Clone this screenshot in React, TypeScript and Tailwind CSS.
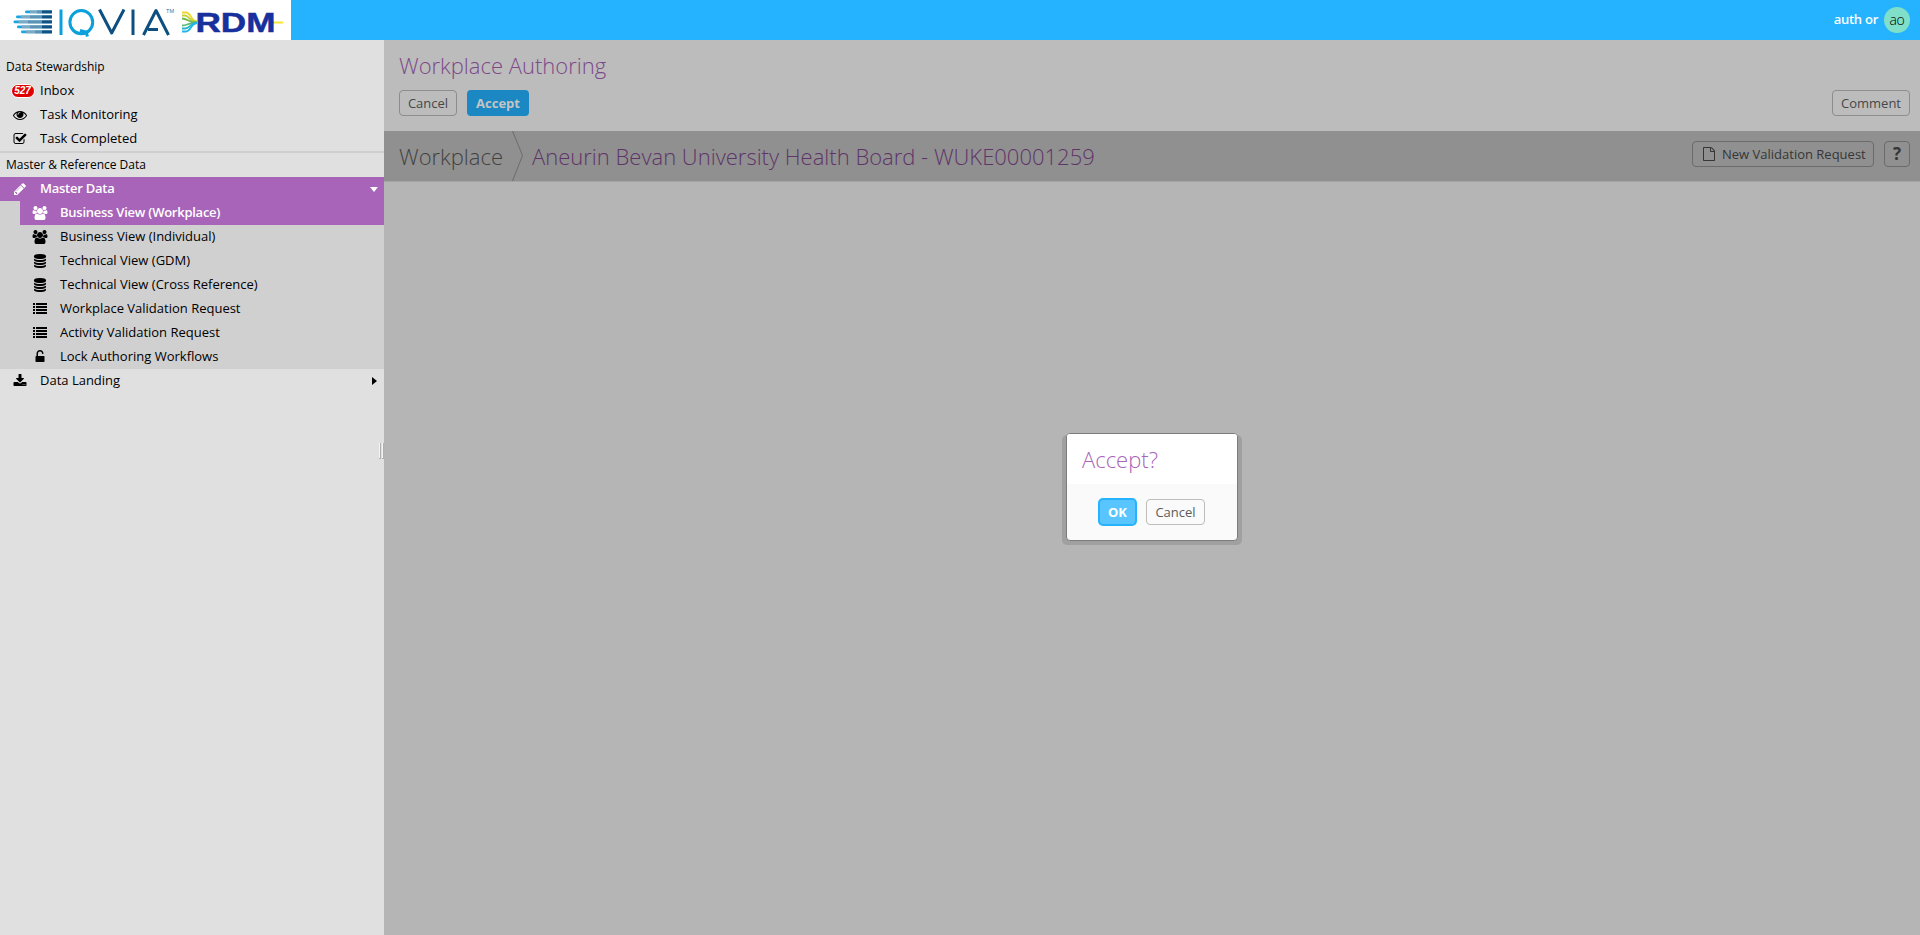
import React from "react";

type Glyph = { d: string; box: string };

const icons: Record<string, Glyph> = {
  eye: {
    box: "0 0 1792 1792",
    d: "M1664 960q-152-236-381-353 61 104 61 225 0 185-131.5 316.5t-316.5 131.5-316.5-131.5-131.5-316.5q0-121 61-225-229 117-381 353 133 205 333.5 326.5t434.5 121.5 434.5-121.5 333.5-326.5zm-720-384q0-20-14-34t-34-14q-125 0-214.5 89.5t-89.5 214.5q0 20 14 34t34 14 34-14 14-34q0-86 61-147t147-61q20 0 34-14t14-34zm848 384q0 34-20 69-140 230-376.5 368.5t-499.5 138.5-499.5-139-376.5-368q-20-35-20-69t20-69q140-229 376.5-368t499.5-139 499.5 139 376.5 368q20 35 20 69z",
  },
  check: {
    box: "0 0 1792 1792",
    d: "M1472 930v318q0 119-84.5 203.5t-203.5 84.5h-832q-119 0-203.5-84.5t-84.5-203.5v-832q0-119 84.5-203.5t203.5-84.5h832q63 0 117 25 15 7 18 23 3 17-9 29l-49 49q-10 10-23 10-3 0-9-2-23-6-45-6h-832q-66 0-113 47t-47 113v832q0 66 47 113t113 47h832q66 0 113-47t47-113v-254q0-13 9-22l64-64q10-10 23-10 6 0 12 3 20 8 20 29zm231-489l-814 814q-24 24-57 24t-57-24l-430-430q-24-24-24-57t24-57l110-110q24-24 57-24t57 24l263 263 647-647q24-24 57-24t57 24l110 110q24 24 24 57t-24 57z",
  },
  pencil: {
    box: "0 0 1792 1792",
    d: "M491 1536l91-91-235-235-91 91v107h128v128h107zm523-928q0-22-22-22-10 0-17 7l-542 542q-7 7-7 17 0 22 22 22 10 0 17-7l542-542q7-7 7-17zm-54-192l416 416-832 832h-416v-416zm683 96q0 53-37 90l-166 166-416-416 166-165q36-38 90-38 53 0 91 38l235 234q37 39 37 91z",
  },
  users: {
    box: "-64 0 2048 1792",
    d: "M593 896q-162 5-265 128h-134q-82 0-138-40.5t-56-118.5q0-353 124-353 6 0 43.5 21t97.5 42.5 119 21.5q67 0 133-23-5 37-5 66 0 139 81 256zm1071 637q0 120-73 189.5t-194 69.5h-874q-121 0-194-69.5t-73-189.5q0-53 3.5-103.5t14-109 26.5-108.5 43-97.5 62-81 85.5-53.5 111.5-20q10 0 43 21.5t73 48 107 48 135 21.5 135-21.5 107-48 73-48 43-21.5q61 0 111.5 20t85.5 53.5 62 81 43 97.5 26.5 108.5 14 109 3.5 103.5zm-1024-1277q0 106-75 181t-181 75-181-75-75-181 75-181 181-75 181 75 75 181zm704 384q0 159-112.5 271.5t-271.5 112.5-271.5-112.5-112.5-271.5 112.5-271.5 271.5-112.5 271.5 112.5 112.5 271.5zm576 225q0 78-56 118.5t-138 40.5h-134q-103-123-265-128 81-117 81-256 0-29-5-66 66 23 133 23 59 0 119-21.5t97.5-42.5 43.5-21q124 0 124 353zm-128-609q0 106-75 181t-181 75-181-75-75-181 75-181 181-75 181 75 75 181z",
  },
  database: {
    box: "0 0 1792 1792",
    d: "M896 768q237 0 443-43t325-127v170q0 69-103 128t-280 93.5-385 34.5-385-34.5-280-93.5-103-128v-170q119 84 325 127t443 43zm0 768q237 0 443-43t325-127v170q0 69-103 128t-280 93.5-385 34.5-385-34.5-280-93.5-103-128v-170q119 84 325 127t443 43zm0-384q237 0 443-43t325-127v170q0 69-103 128t-280 93.5-385 34.5-385-34.5-280-93.5-103-128v-170q119 84 325 127t443 43zm0-1152q208 0 385 34.5t280 93.5 103 128v128q0 69-103 128t-280 93.5-385 34.5-385-34.5-280-93.5-103-128v-128q0-69 103-128t280-93.5 385-34.5z",
  },
  list: {
    box: "0 0 14 14",
    d: "M0 1h2v2H0zM3 1h11v2H3zM0 4h2v2H0zM3 4h11v2H3zM0 7h2v2H0zM3 7h11v2H3zM0 10h2v2H0zM3 10h11v2H3z",
  },
  unlock: {
    box: "0 0 1792 1792",
    d: "M1376 768q40 0 68 28t28 68v576q0 40-28 68t-68 28h-960q-40 0-68-28t-28-68v-576q0-40 28-68t68-28h32v-320q0-185 131.5-316.5t316.5-131.5 316.5 131.5 131.5 316.5q0 26-19 45t-45 19h-64q-26 0-45-19t-19-45q0-106-75-181t-181-75-181 75-75 181v320h736z",
  },
  download: {
    box: "0 0 1792 1792",
    d: "M1344 1344q0-26-19-45t-45-19-45 19-19 45 19 45 45 19 45-19 19-45zm256 0q0-26-19-45t-45-19-45 19-19 45 19 45 45 19 45-19 19-45zm128-224v320q0 40-28 68t-68 28h-1472q-40 0-68-28t-28-68v-320q0-40 28-68t68-28h465l135 136q58 56 136 56t136-56l136-136h464q40 0 68 28t28 68zm-325-569q17 41-14 70l-448 448q-18 19-45 19t-45-19l-448-448q-31-29-14-70 17-39 59-39h256v-448q0-26 19-45t45-19h256q26 0 45 19t19 45v448h256q42 0 59 39z",
  },
  file: {
    box: "0 0 1792 1792",
    d: "M1596 380q28 28 48 76t20 88v1152q0 40-28 68t-68 28h-1344q-40 0-68-28t-28-68v-1600q0-40 28-68t68-28h896q40 0 88 20t76 48zm-444-244v376h376q-10-29-22-41l-313-313q-12-12-41-22zm384 1528v-1024h-416q-40 0-68-28t-28-68v-416h-768v1536h1280z",
  },
};

function Icon({ name, className = "h-3.5" }: { name: string; className?: string }) {
  return (
    <svg viewBox={icons[name].box} className={className} fill="currentColor">
      <path d={icons[name].d} />
    </svg>
  );
}

const handBars = [
  [25, 10.5, 37],
  [16, 15.5, 30],
  [13.5, 20.5, 28],
  [17, 25.5, 30],
  [21, 30.5, 35],
];

function Logo() {
  return (
    <svg width="291" height="40" viewBox="0 0 291 40">
      {handBars.map(([x, y, mid]) => (
        <g key={y}>
          <rect x={x} y={y} width={52 - x} height="2.8" rx="1.4" fill="#1ba4df" />
          <rect x={x + 5} y={y} width={47 - x} height="2.8" fill="#7fa9c2" />
          <rect x={mid} y={y} width={52 - mid} height="2.8" fill="#5c93b5" />
          <rect x="42" y={y} width="10" height="2.8" rx="0.5" fill="#0f5283" />
        </g>
      ))}
      <g fill="none" strokeWidth="3">
        <path d="M61 9.5v25.5" stroke="#0aa0dc" />
        <ellipse cx="81.3" cy="22.2" rx="11.4" ry="11.6" stroke="#0aa0dc" />
        <path d="M80 30.5l6 1.5 1.500 4.500" stroke="#0aa0dc" />
        <path d="M99.5 9.5l12.2 23.5 12.3-23.5" stroke="#0c4f80" strokeLinejoin="round" />
        <path d="M133 9.5v25.5" stroke="#0c4f80" />
        <path d="M143.5 35l12.5-24.5 12.5 24.5M148 29.5h10" stroke="#0c4f80" strokeLinejoin="round" />
      </g>
      <text x="166" y="13" className="fill-[#3d7199] font-['Liberation_Sans'] text-[6px]" textLength="8" lengthAdjust="spacingAndGlyphs">TM</text>
      <g fill="none" strokeWidth="1.8">
        <path d="M182 12.5h4c5 0 5 9 11 9" stroke="#f0d62a" />
        <path d="M182 15.5h3c4 0 5 6.5 12 6.5" stroke="#c3d13a" />
        <path d="M182 18.5c6 0 6 4 15 4" stroke="#6fb84a" />
        <path d="M182 25.5c6 0 6-3 15-3" stroke="#5cb97a" />
        <path d="M182 28.5h3c5 0 5-5.5 12-5.5" stroke="#27b6c9" />
        <path d="M182 31.5h4c5 0 5-8.5 11-8.5" stroke="#22b4ea" />
        <path d="M273 22.5h10" stroke="#f7e533" strokeWidth="2" />
      </g>
      <text x="195.5" y="32" className="fill-[#17309c] stroke-[#17309c] font-['Liberation_Sans'] text-[28px] font-bold" strokeWidth="0.5" textLength="80" lengthAdjust="spacingAndGlyphs">RDM</text>
    </svg>
  );
}

function Row({ icon, label }: { icon: string; label: string }) {
  return (
    <li className="flex h-6 items-center">
      <span className="flex w-10 justify-center">
        <Icon name={icon} />
      </span>
      <span>{label}</span>
    </li>
  );
}

const subItems = [
  ["users", "Business View (Workplace)"],
  ["users", "Business View (Individual)"],
  ["database", "Technical View (GDM)"],
  ["database", "Technical View (Cross Reference)"],
  ["list", "Workplace Validation Request"],
  ["list", "Activity Validation Request"],
  ["unlock", "Lock Authoring Workflows"],
];

function Sidebar() {
  return (
    <nav className="flex w-96 shrink-0 flex-col bg-[#e0e0e0] pt-[15px] text-[13px] text-black">
      <h2 className="flex h-6 items-center pl-1.5 text-xs">Data Stewardship</h2>
      <ul>
        <li className="flex h-6 items-center">
          <span className="flex w-10 justify-center pl-[5px]">
            <span className="flex h-[14px] w-6 shrink-0 items-center justify-center rounded-full border border-white bg-[#e00000] font-['Liberation_Sans',sans-serif] text-[10px] leading-3 font-bold text-white italic">
              527
            </span>
          </span>
          Inbox
        </li>
        <Row icon="eye" label="Task Monitoring" />
        <Row icon="check" label="Task Completed" />
      </ul>
      <hr className="border-t-2 border-[#cfcfcf]" />
      <h2 className="flex h-6 items-center pl-1.5 text-xs">Master &amp; Reference Data</h2>
      <div className="flex h-6 items-center bg-[#a864b8] font-semibold tracking-[-0.25px] text-white">
        <span className="flex w-10 justify-center">
          <Icon name="pencil" />
        </span>
        <span className="flex-1">Master Data</span>
        <svg width="8" height="5" className="mr-1.5" fill="currentColor">
          <path d="M0 0h8L4 5z" />
        </svg>
      </div>
      <ul className="bg-[#d0d0d0] pl-5">
        {subItems.map(([icon, label], i) => (
          <li key={label} className={i === 0 ? "flex h-6 items-center bg-[#a864b8] font-semibold tracking-[-0.25px] text-white" : "flex h-6 items-center"}>
            <span className="flex w-10 justify-center">
              <Icon name={icon} />
            </span>
            {label}
          </li>
        ))}
      </ul>
      <div className="flex h-6 items-center">
        <span className="flex w-10 justify-center">
          <Icon name="download" />
        </span>
        <span className="flex-1">Data Landing</span>
        <svg width="5" height="8" className="mr-[7px]" fill="currentColor">
          <path d="M0 0l5 4-5 4z" />
        </svg>
      </div>
      <div className="mt-[50px] flex h-4 gap-px self-end">
        <i className="w-0.5 border-r border-b border-[#b0b0b0] bg-[#f4f4f4]" />
        <i className="w-0.5 border-r border-b border-[#b0b0b0] bg-[#f4f4f4]" />
      </div>
    </nav>
  );
}

export default function App() {
  return (
    <div className="flex h-[935px] w-[1920px] flex-col overflow-hidden font-['Open_Sans',sans-serif]">
      <header className="flex h-10 shrink-0 items-center justify-between bg-[#25b3ff]">
        <div className="h-10 w-[291px] bg-white">
          <Logo />
        </div>
        <div className="flex items-center gap-1.5 pr-2.5 text-[13px] font-semibold tracking-[-0.25px] text-white">
          auth or
          <span className="flex size-[26px] items-center justify-center rounded-full bg-[#80dfc8] text-sm font-light text-black">ao</span>
        </div>
      </header>
      <div className="flex min-h-0 flex-1">
        <Sidebar />
        <main className="relative flex flex-1 flex-col bg-[#b5b5b5] text-[13px] text-[#474747]">
          <section className="flex h-[91px] flex-col bg-[#bcbcbc] pr-2.5 pl-[15px]">
            <h1 className="mt-[10px] h-[30px] text-[22px] leading-[30px] font-light text-[#7d4989]">Workplace Authoring</h1>
            <div className="mt-[10px] flex gap-2.5">
              <button className="h-[26px] w-[58px] rounded border border-[#8d8d8d] pt-0.5">Cancel</button>
              <button className="h-[26px] w-[62px] rounded bg-[#1b88c3] pt-0.5 font-bold text-[#c4c4c4]">Accept</button>
              <button className="ml-auto h-[26px] w-[78px] rounded border border-[#8d8d8d] pt-0.5">Comment</button>
            </div>
          </section>
          <section className="flex h-[51px] border-b border-[#a4a4a4] bg-[#909090] pr-2.5 pl-[15px]">
            <span className="w-[113px] text-[22px] leading-[50px] font-light text-[#424242]">Workplace</span>
            <svg width="12" height="50" viewBox="0 0 12 50" fill="none" stroke="#6c6c6c">
              <path d="M0.5 0l10 24.5L0.5 50" />
            </svg>
            <h2 className="pl-2 text-[22px] leading-[50px] font-light text-[#5f3469]">Aneurin Bevan University Health Board - WUKE00001259</h2>
            <div className="ml-auto flex gap-2.5 pt-2.5 text-[#363636]">
              <button className="flex h-[26px] w-[182px] items-center rounded border border-[#6b6b6b] pl-[9px]">
                <Icon name="file" className="mr-1.5 h-3.5" />
                <span className="pt-0.5">New Validation Request</span>
              </button>
              <button className="h-[26px] w-[26px] rounded border border-[#6b6b6b] text-[17px] leading-6 font-bold">?</button>
            </div>
          </section>
          <div className="absolute inset-0 flex items-center justify-center pb-px">
            <div role="dialog" className="h-[108px] w-[172px] overflow-hidden rounded border border-[#7c7c7c] bg-[#fafafa] shadow-[0_3px_0_1px_#a0a0a0,-3px_3px_0_1px_#a0a0a0,3px_3px_0_1px_#a0a0a0]">
              <h3 className="h-[50px] bg-white pl-[15px] text-[22px] leading-[50px] font-light text-[#a864b8]">Accept?</h3>
              <div className="flex items-center justify-center gap-[9px] pt-3.5 pr-px">
                <button className="h-7 w-[39px] rounded-[5px] border-2 border-[#25b3ff] bg-[#59c5ff] pt-0.5 font-bold text-white">OK</button>
                <button className="h-[26px] w-[59px] rounded border border-[#bcbcbc] pt-0.5 text-[#5c5c5c]">Cancel</button>
              </div>
            </div>
          </div>
        </main>
      </div>
    </div>
  );
}
